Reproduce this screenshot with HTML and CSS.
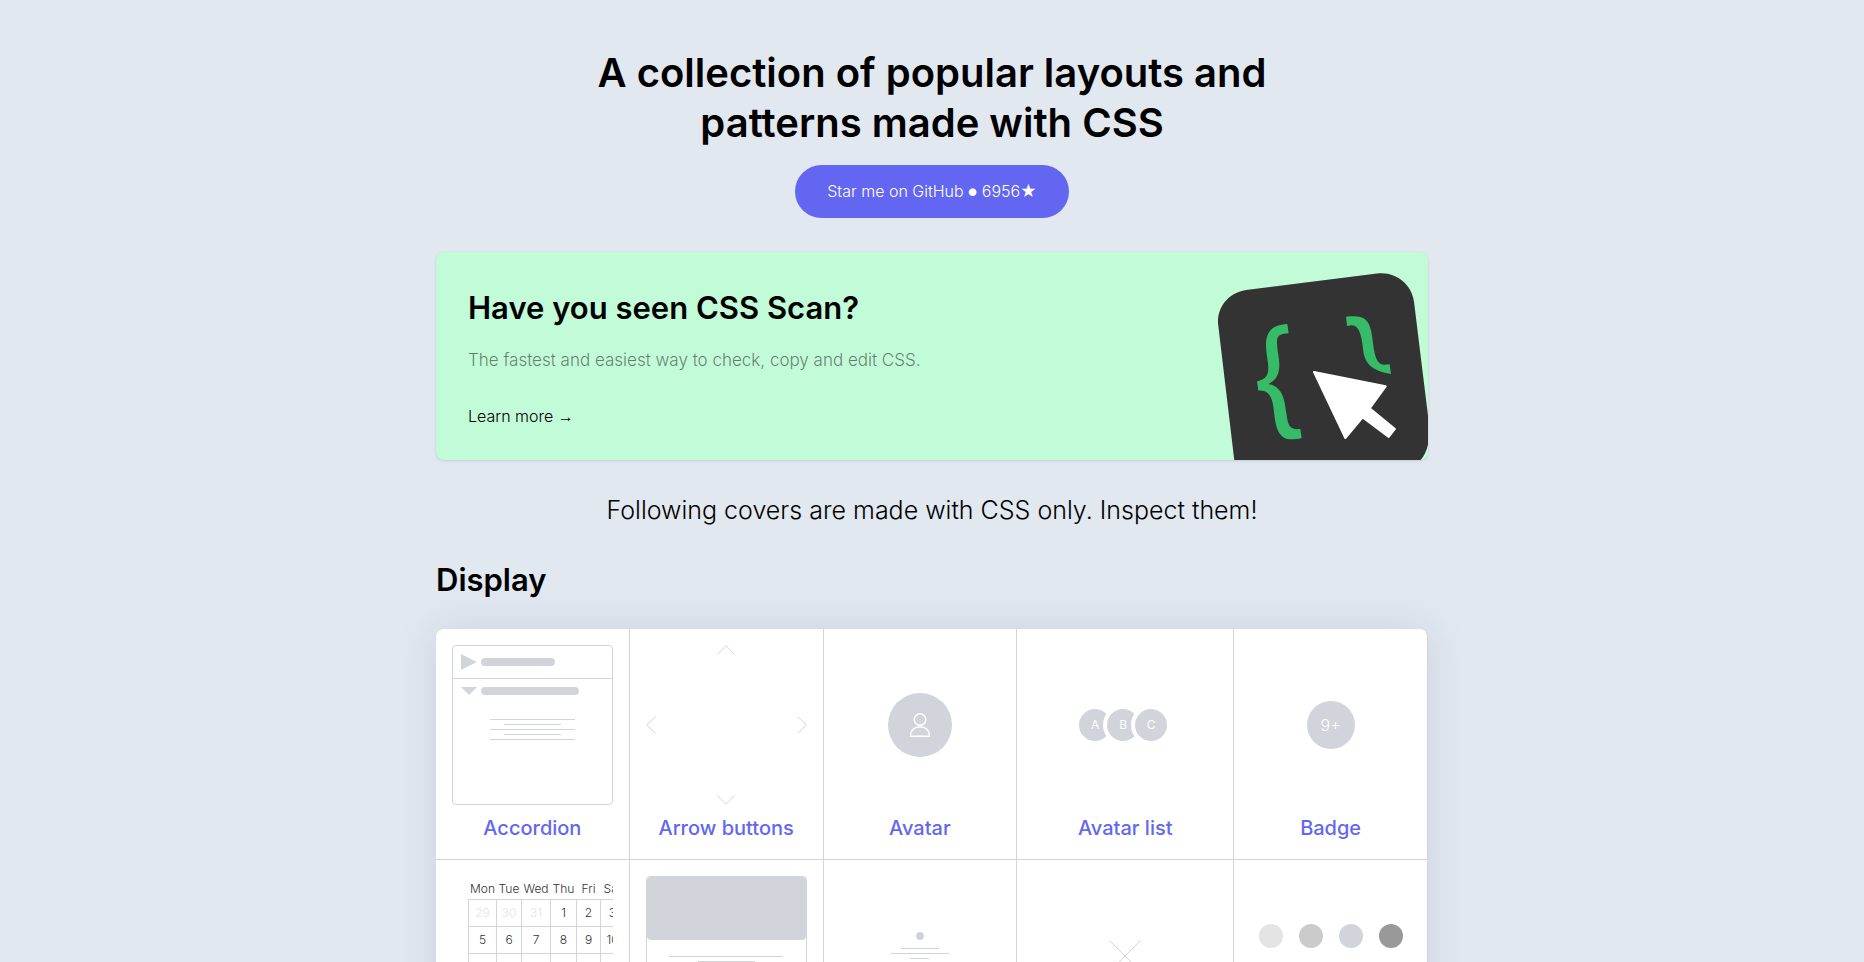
FILE: index.html
```html
<!DOCTYPE html>
<html lang="en">
<head>
<meta charset="utf-8">
<meta name="viewport" content="width=device-width, initial-scale=1">
<title>CSS Layout</title>
<link rel="stylesheet" href="styles.css">
</head>
<body>
<main class="container">
  <header class="hero">
    <h1 class="hero-title">A collection of popular layouts and patterns made with CSS</h1>
    <a class="star" href="#">Star me on GitHub <span class="bullet">●</span> 6956★</a>
  </header>

  <section class="banner">
    <h2 class="heading">Have you seen CSS Scan?</h2>
    <p class="banner-text">The fastest and easiest way to check, copy and edit CSS.</p>
    <a class="banner-link" href="#">Learn more <span class="arrow-glyph">→</span></a>
    <svg class="banner-art" viewBox="90 36 654 624" aria-hidden="true">
      <path fill="#333" d="M163 662L114 250C112 196 150 155 204 149L597 100C650 96 696 135 702 185L748 560C750 600 742 640 720 662Z"/>
      <path fill="#36bb69" d="M322 252C275 255 257 275 258 320C259 345 265 365 265 385C265 410 252 420 231 424L235 452C262 450 275 465 280 500C286 545 287 598 335 598C345 598 355 597 365 594L361 567C330 570 324 560 319 520C314 480 308 440 265 432C290 420 298 400 298 375C297 345 291 330 291 305C291 285 305 281 326 280Z"/>
      <path fill="#36bb69" d="M498 230C545 225 565 232 574 275C582 315 580 372 612 374L629 373L633 402C590 395 560 380 552 345C546 310 545 256 515 256L501 258Z"/>
      <path fill="#fff" stroke="#fff" stroke-width="6" stroke-linejoin="round" d="M402 396L617 439L569 505L645 567L626 591L548 532L496 594Z"/>
    </svg>
  </section>

  <p class="intro">Following covers are made with CSS only. Inspect them!</p>

  <h2 class="heading">Display</h2>
  <div class="grid">
    <a class="cell" href="#">
      <div class="cover accordion">
        <div class="acc-row acc-closed"><span class="tri-right"></span><span class="pill"></span></div>
        <div class="acc-row"><span class="tri-down"></span><span class="pill pill-long"></span></div>
        <div class="lines acc-lines"><i class="w60"></i><i class="w40"></i><i class="w60"></i><i class="w40"></i><i class="w60"></i></div>
      </div>
      <span class="label">Accordion</span>
    </a>
    <a class="cell" href="#">
      <div class="cover arrows">
        <svg class="arrow-v" viewBox="0 0 18 10"><path d="M.5 9.500L9 .7L17.500 9.500"/></svg>
        <div class="arrow-row">
          <svg class="arrow-h" viewBox="0 0 10 18"><path d="M9.500 .5L.7 9L9.500 17.500"/></svg>
          <svg class="arrow-h" viewBox="0 0 10 18"><path d="M.5 .5L9.300 9L.5 17.500"/></svg>
        </div>
        <svg class="arrow-v" viewBox="0 0 18 10"><path d="M.5 .5L9 9.300L17.500 .5"/></svg>
      </div>
      <span class="label">Arrow buttons</span>
    </a>
    <a class="cell" href="#">
      <div class="cover center">
        <div class="avatar">
          <svg class="person" viewBox="0 0 24 24"><circle cx="12" cy="6.500" r="5.800"/><path d="M2.500 23.300H21.500C21.500 17.500 17.500 13.700 12 13.700S2.500 17.500 2.500 23.300Z"/></svg>
        </div>
      </div>
      <span class="label">Avatar</span>
    </a>
    <a class="cell" href="#">
      <div class="cover center avatars">
        <span class="mini">A</span><span class="mini">B</span><span class="mini">C</span>
      </div>
      <span class="label">Avatar list</span>
    </a>
    <a class="cell" href="#">
      <div class="cover center"><span class="badge">9+</span></div>
      <span class="label">Badge</span>
    </a>

    <div class="cell">
      <div class="cover calendar">
        <table class="month">
          <colgroup><col class="c28"><col class="c25"><col class="c29"><col class="c26"><col class="c24"><col class="c24"></colgroup>
          <thead><tr><th>Mon</th><th>Tue</th><th>Wed</th><th>Thu</th><th>Fri</th><th>Sat</th></tr></thead>
          <tbody>
            <tr><td class="off">29</td><td class="off">30</td><td class="off">31</td><td>1</td><td>2</td><td>3</td></tr>
            <tr><td>5</td><td>6</td><td>7</td><td>8</td><td>9</td><td>10</td></tr>
            <tr><td></td><td></td><td></td><td></td><td></td><td></td></tr>
          </tbody>
        </table>
      </div>
    </div>
    <div class="cell">
      <div class="cover card">
        <div class="card-image"></div>
        <div class="lines"><i class="w80"></i><i class="w40"></i></div>
      </div>
    </div>
    <div class="cell">
      <div class="cover centering">
        <span class="dot"></span>
        <div class="lines short"><i class="w66"></i><i class="w100"></i><i class="w33"></i></div>
      </div>
    </div>
    <div class="cell">
      <div class="cover center">
        <svg class="cross" viewBox="0 0 32 32"><path d="M.5 .5L31.500 31.500M31.500 .5L.5 31.500"/></svg>
      </div>
    </div>
    <div class="cell">
      <div class="cover swatches">
        <span class="swatch s1"></span><span class="swatch s2"></span><span class="swatch s3"></span><span class="swatch s4"></span>
      </div>
    </div>
  </div>
</main>
</body>
</html>
```

FILE: styles.css
```css
* { box-sizing: border-box; }

body {
  margin: 0;
  height: 100vh;
  overflow: hidden;
  background: #e2e8f0;
  color: #000;
  font-family: Inter, "Liberation Sans", sans-serif;
  font-size: 16px;
  font-weight: 300;
  line-height: 24px;
}

a { color: inherit; text-decoration: none; }
h1, h2, p { margin: 0; }
svg { display: block; fill: none; stroke: #d1d5db; }

.container { max-width: 992px; margin: 0 auto; padding-top: 48px; }

.hero {
  display: flex;
  flex-direction: column;
  align-items: center;
  gap: 17px;
}
.hero-title {
  max-width: 768px;
  text-align: center;
  font-size: 40px;
  font-weight: 600;
  line-height: 50px;
}
.star {
  padding: 14px 32px 15px;
  border-radius: 32px;
  background: #6366f1;
  color: #fff;
}
.bullet { font-size: 10px; line-height: 16px; vertical-align: 1px; }

.banner {
  position: relative;
  display: flex;
  flex-direction: column;
  align-items: flex-start;
  margin-top: 34px;
  padding: 32px;
  overflow: hidden;
  border-radius: 8px;
  background: #c2fbd7;
  box-shadow: 0 1px 3px rgba(0, 0, 0, 0.12);
}
.heading { font-size: 31px; font-weight: 600; line-height: 48px; }
.banner-text { margin-top: 16px; color: rgba(0, 0, 0, 0.5); font-size: 17px; }
.banner-link { margin-top: 32px; }
.arrow-glyph { font-family: "Liberation Sans", sans-serif; line-height: 16px; }
.banner-art {
  position: absolute;
  right: 0;
  bottom: 0;
  width: 218px;
  height: 208px;
  stroke: none;
}

.intro {
  margin: 32px 0 28px;
  text-align: center;
  font-size: 25px;
  line-height: 36px;
}

.grid {
  display: grid;
  grid-template-columns: 1fr 1fr 1fr 217px 1fr;
  margin-top: 25px;
  border-radius: 8px;
  background: #fff;
  box-shadow: 0 0 40px rgba(100, 110, 145, 0.18);
}
.cell {
  display: flex;
  flex-direction: column;
  gap: 9px;
  min-width: 0;
  padding: 16px;
  border-right: 1px solid #d1d5db;
  border-bottom: 1px solid #d1d5db;
}
.cell:nth-child(5) { border-top-right-radius: 8px; }
.cover { height: 160px; }
.label {
  color: #6366f1;
  text-align: center;
  font-size: 20px;
  font-weight: 500;
  line-height: 29px;
}
.center { display: flex; align-items: center; justify-content: center; }

.lines { display: flex; flex-direction: column; align-items: center; gap: 4px; }
.lines i { height: 1px; background: #d1d5db; }
.w33 { width: 33%; }
.w40 { width: 36%; }
.w60 { width: 54%; }
.w66 { width: 66%; }
.w80 { width: 72%; }
.w100 { width: 100%; }

.accordion { border: 1px solid #d1d5db; border-radius: 4px; }
.acc-row { display: flex; align-items: center; gap: 4px; padding: 8px; }
.acc-closed { border-bottom: 1px solid #d1d5db; }
.tri-right {
  border-left: 16px solid #d1d5db;
  border-top: 8px solid transparent;
  border-bottom: 8px solid transparent;
}
.tri-down {
  border-top: 8px solid #d1d5db;
  border-left: 8px solid transparent;
  border-right: 8px solid transparent;
}
.pill { width: 74px; height: 8px; border-radius: 4px; background: #d1d5db; }
.pill-long { width: 98px; }
.acc-lines { margin-top: 16px; }

.arrows {
  display: flex;
  flex-direction: column;
  align-items: center;
  justify-content: space-between;
}
.arrow-row { display: flex; justify-content: space-between; align-self: stretch; }
.arrow-v { width: 18px; height: 10px; }
.arrow-h { width: 10px; height: 18px; }

.avatar {
  display: flex;
  align-items: center;
  justify-content: center;
  width: 64px;
  height: 64px;
  border-radius: 50%;
  background: #d1d5db;
}
.person { width: 24px; height: 24px; stroke: #fff; stroke-width: 1.4; }

.avatars { padding-right: 4px; }
.mini {
  width: 40px;
  height: 40px;
  margin-right: -12px;
  border: 4px solid #fff;
  border-radius: 50%;
  background: #d1d5db;
  color: #fff;
  text-align: center;
  font-size: 12px;
  font-weight: 400;
  line-height: 32px;
}
.mini:last-child { margin-right: 0; }
.badge {
  width: 48px;
  border-radius: 50%;
  background: #d1d5db;
  color: #fff;
  text-align: center;
  line-height: 48px;
}

.calendar { padding-left: 16px; overflow: hidden; }
.month {
  width: 157px;
  table-layout: fixed;
  border-collapse: collapse;
  color: #333;
  font-size: 12px;
  line-height: 18px;
  text-align: center;
}
.month th { height: 23px; padding: 3px 0 0; font-weight: 300; }
.month td { height: 27px; padding: 0; border: 1px solid #d1d5db; }
.month .off { color: #e2e4e9; }
.c24 { width: 24px; }
.c25 { width: 25px; }
.c26 { width: 26px; }
.c28 { width: 28px; }
.c29 { width: 29px; }

.card { border: 1px solid #d1d5db; border-radius: 4px; }
.card-image { height: 63px; margin-bottom: 16px; border-radius: 4px; background: #d1d5db; }

.centering {
  display: flex;
  flex-direction: column;
  align-items: center;
  gap: 8px;
  padding-top: 56px;
}
.dot { width: 8px; height: 8px; border-radius: 50%; background: #d1d5db; }
.short { width: 58px; }

.cross { width: 32px; height: 32px; }

.swatches { display: flex; justify-content: center; gap: 16px; padding-top: 48px; }
.swatch { width: 24px; height: 24px; border-radius: 50%; }
.s1 { background: #e4e4e4; }
.s2 { background: #cbcbcb; }
.s3 { background: #d1d5db; }
.s4 { background: #999; }
```
